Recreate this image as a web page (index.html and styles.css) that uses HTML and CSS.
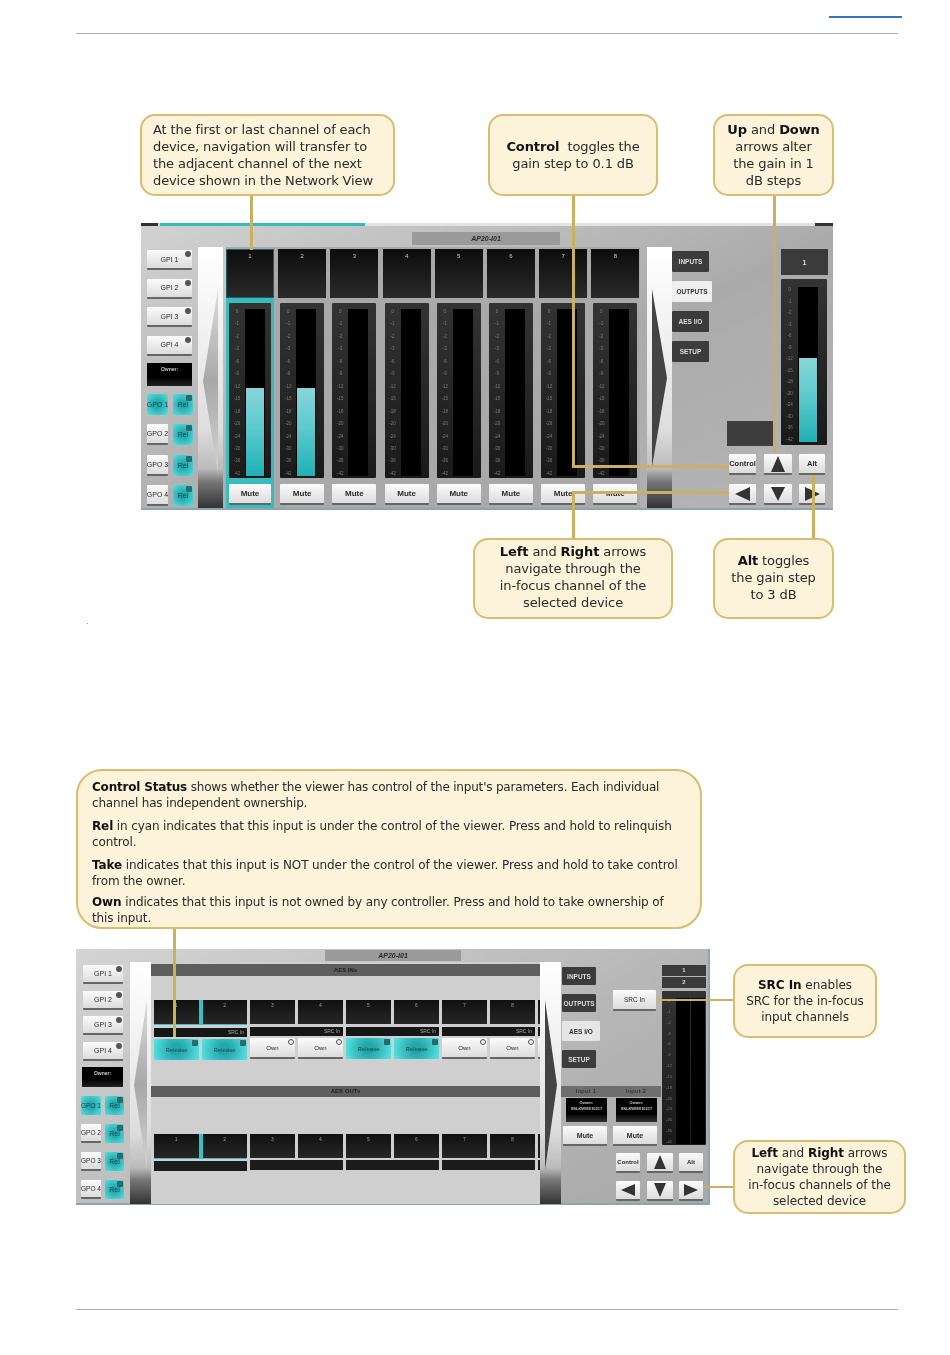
FILE: index.html
```html
<!DOCTYPE html>
<html lang="en">
<head>
<meta charset="utf-8">
<title>AP20-I01 control panel</title>
<link rel="stylesheet" href="styles.css">
</head>
<body>
<div class="page">
  <header class="page-head"><a class="head-link" href="#"></a><div class="rule"></div></header>

  <section class="figure fig-a">
    <div class="panel panel-a">
      <div class="topbar"><i class="tb-dark"></i><i class="tb-cyan"></i><i class="tb-light"></i><i class="tb-dark2"></i></div>
      <div class="title title-a">AP20-I01</div>
      <div class="body-a">
        <div class="gp-col gp-a">
          <div class="btn gpi">GPI 1<i class="dot"></i></div>
          <div class="btn gpi">GPI 2<i class="dot"></i></div>
          <div class="btn gpi">GPI 3<i class="dot"></i></div>
          <div class="btn gpi">GPI 4<i class="dot"></i></div>
          <div class="owner">Owner:</div>
          <div class="gpo-row"><div class="cy gpo">GPO 1</div><div class="cy rel">Rel<i class="dot"></i></div></div>
          <div class="gpo-row"><div class="btn gpo">GPO 2</div><div class="cy rel">Rel<i class="dot"></i></div></div>
          <div class="gpo-row"><div class="btn gpo">GPO 3</div><div class="cy rel">Rel<i class="dot"></i></div></div>
          <div class="gpo-row"><div class="btn gpo">GPO 4</div><div class="cy rel">Rel<i class="dot"></i></div></div>
        </div>
        <div class="nav nav-a"><svg class="nav-arrow" width="25" height="184" viewBox="0 0 25 184"><defs><linearGradient id="fadeA" x1="0" y1="0" x2="0" y2="1"><stop offset="0" stop-color="#dcdcdc"/><stop offset=".5" stop-color="#a8a8a8"/><stop offset="1" stop-color="#d4d4d4"/></linearGradient></defs><polygon points="5,92 20,0 20,184" fill="url(#fadeA)"/></svg></div>
        <div class="channels">
          <div class="channel sel"><div class="ch-top">1</div><div class="ch-meter"><div class="scale"><b>0</b><b>-1</b><b>-2</b><b>-3</b><b>-6</b><b>-9</b><b>-12</b><b>-15</b><b>-18</b><b>-20</b><b>-24</b><b>-30</b><b>-36</b><b>-42</b></div><div class="well"><div class="fill"></div></div></div><div class="btn mute">Mute</div></div>
          <div class="channel"><div class="ch-top">2</div><div class="ch-meter"><div class="scale"><b>0</b><b>-1</b><b>-2</b><b>-3</b><b>-6</b><b>-9</b><b>-12</b><b>-15</b><b>-18</b><b>-20</b><b>-24</b><b>-30</b><b>-36</b><b>-42</b></div><div class="well"><div class="fill"></div></div></div><div class="btn mute">Mute</div></div>
          <div class="channel"><div class="ch-top">3</div><div class="ch-meter"><div class="scale"><b>0</b><b>-1</b><b>-2</b><b>-3</b><b>-6</b><b>-9</b><b>-12</b><b>-15</b><b>-18</b><b>-20</b><b>-24</b><b>-30</b><b>-36</b><b>-42</b></div><div class="well"></div></div><div class="btn mute">Mute</div></div>
          <div class="channel"><div class="ch-top">4</div><div class="ch-meter"><div class="scale"><b>0</b><b>-1</b><b>-2</b><b>-3</b><b>-6</b><b>-9</b><b>-12</b><b>-15</b><b>-18</b><b>-20</b><b>-24</b><b>-30</b><b>-36</b><b>-42</b></div><div class="well"></div></div><div class="btn mute">Mute</div></div>
          <div class="channel"><div class="ch-top">5</div><div class="ch-meter"><div class="scale"><b>0</b><b>-1</b><b>-2</b><b>-3</b><b>-6</b><b>-9</b><b>-12</b><b>-15</b><b>-18</b><b>-20</b><b>-24</b><b>-30</b><b>-36</b><b>-42</b></div><div class="well"></div></div><div class="btn mute">Mute</div></div>
          <div class="channel"><div class="ch-top">6</div><div class="ch-meter"><div class="scale"><b>0</b><b>-1</b><b>-2</b><b>-3</b><b>-6</b><b>-9</b><b>-12</b><b>-15</b><b>-18</b><b>-20</b><b>-24</b><b>-30</b><b>-36</b><b>-42</b></div><div class="well"></div></div><div class="btn mute">Mute</div></div>
          <div class="channel"><div class="ch-top">7</div><div class="ch-meter"><div class="scale"><b>0</b><b>-1</b><b>-2</b><b>-3</b><b>-6</b><b>-9</b><b>-12</b><b>-15</b><b>-18</b><b>-20</b><b>-24</b><b>-30</b><b>-36</b><b>-42</b></div><div class="well"></div></div><div class="btn mute">Mute</div></div>
          <div class="channel"><div class="ch-top">8</div><div class="ch-meter"><div class="scale"><b>0</b><b>-1</b><b>-2</b><b>-3</b><b>-6</b><b>-9</b><b>-12</b><b>-15</b><b>-18</b><b>-20</b><b>-24</b><b>-30</b><b>-36</b><b>-42</b></div><div class="well"></div></div><div class="btn mute">Mute</div></div>
        </div>
        <div class="nav nav-a nav-a-right"><svg class="nav-arrow" width="25" height="178" viewBox="0 0 25 178"><polygon points="20,89 5,0 5,178" fill="#444"/></svg></div>
        <div class="side-a">
          <div class="side-a-top">
            <div class="tabs tabs-a">
              <div class="tab">INPUTS</div>
              <div class="tab on">OUTPUTS</div>
              <div class="tab">AES I/O</div>
              <div class="tab">SETUP</div>
            </div>
            <div class="blank-col"><div class="blank-box"></div></div>
            <div class="master">
              <div class="num-box">1</div>
              <div class="ch-meter master-meter"><div class="scale"><b>0</b><b>-1</b><b>-2</b><b>-3</b><b>-6</b><b>-9</b><b>-12</b><b>-15</b><b>-18</b><b>-20</b><b>-24</b><b>-30</b><b>-36</b><b>-42</b></div><div class="well"><div class="fill"></div></div></div>
            </div>
          </div>
          <div class="pad pad-a">
            <div class="btn pad-btn">Control</div>
            <div class="btn pad-btn"><svg width="18" height="18" viewBox="0 0 18 18"><polygon points="9,1 16,17 2,17" fill="#333"/></svg></div>
            <div class="btn pad-btn">Alt</div>
            <div class="btn pad-btn"><svg width="18" height="16" viewBox="0 0 18 16"><polygon points="1,8 16,1 16,15" fill="#333"/></svg></div>
            <div class="btn pad-btn"><svg width="18" height="16" viewBox="0 0 18 16"><polygon points="9,15 2,1 16,1" fill="#333"/></svg></div>
            <div class="btn pad-btn"><svg width="18" height="16" viewBox="0 0 18 16"><polygon points="17,8 2,1 2,15" fill="#333"/></svg></div>
          </div>
        </div>
      </div>
    </div>

    <i class="wire a-w1"></i><i class="wire a-w2"></i><i class="wire a-w3"></i><i class="wire a-w4"></i><i class="wire a-w5"></i><i class="wire a-w6"></i><i class="wire a-w7"></i>

    <div class="callout a-c1">At the first or last channel of each<br>device, navigation will transfer to<br>the adjacent channel of the next<br>device shown in the Network View</div>
    <div class="callout center a-c2"><strong>Control</strong>&nbsp; toggles the<br>gain step to 0.1 dB</div>
    <div class="callout center a-c3"><strong>Up</strong> and <strong>Down</strong><br>arrows alter<br>the gain in 1<br>dB steps</div>
    <div class="callout center a-c4"><strong>Left</strong> and <strong>Right</strong> arrows<br>navigate through the<br>in-focus channel of the<br>selected device</div>
    <div class="callout center a-c5"><strong>Alt</strong> toggles<br>the gain step<br>to 3 dB</div>
    <i class="speck"></i>
  </section>

  <section class="figure fig-b">
    <div class="panel panel-b">
      <div class="title title-b">AP20-I01</div>
      <div class="body-b">
        <div class="gp-col gp-b">
          <div class="btn gpi">GPI 1<i class="dot"></i></div>
          <div class="btn gpi">GPI 2<i class="dot"></i></div>
          <div class="btn gpi">GPI 3<i class="dot"></i></div>
          <div class="btn gpi">GPI 4<i class="dot"></i></div>
          <div class="owner">Owner:</div>
          <div class="gpo-row"><div class="cy gpo">GPO 1</div><div class="cy rel">Rel<i class="dot"></i></div></div>
          <div class="gpo-row"><div class="btn gpo">GPO 2</div><div class="cy rel">Rel<i class="dot"></i></div></div>
          <div class="gpo-row"><div class="btn gpo">GPO 3</div><div class="cy rel">Rel<i class="dot"></i></div></div>
          <div class="gpo-row"><div class="btn gpo">GPO 4</div><div class="cy rel">Rel<i class="dot"></i></div></div>
        </div>
        <div class="nav nav-b"><svg class="nav-arrow" width="21" height="170" viewBox="0 0 21 170"><defs><linearGradient id="fadeB" x1="0" y1="0" x2="0" y2="1"><stop offset="0" stop-color="#dcdcdc"/><stop offset=".5" stop-color="#a8a8a8"/><stop offset="1" stop-color="#d4d4d4"/></linearGradient></defs><polygon points="4,85 17,0 17,170" fill="url(#fadeB)"/></svg></div>
        <div class="aes">
          <div class="aes-head">AES INs</div>
          <div class="aes-row row-in">
            <div class="group"><div class="pair sel"><div class="box">1</div><div class="box">2</div></div><div class="strip">SRC In</div><div class="pair-btns"><div class="cy rel-wide">Release<i class="dot"></i></div><div class="cy rel-wide">Release<i class="dot"></i></div></div></div>
            <div class="group"><div class="pair"><div class="box">3</div><div class="box">4</div></div><div class="strip">SRC In</div><div class="pair-btns"><div class="btn own">Own<i class="dot ring"></i></div><div class="btn own">Own<i class="dot ring"></i></div></div></div>
            <div class="group"><div class="pair"><div class="box">5</div><div class="box">6</div></div><div class="strip">SRC In</div><div class="pair-btns"><div class="cy rel-wide">Release<i class="dot"></i></div><div class="cy rel-wide">Release<i class="dot"></i></div></div></div>
            <div class="group"><div class="pair"><div class="box">7</div><div class="box">8</div></div><div class="strip">SRC In</div><div class="pair-btns"><div class="btn own">Own<i class="dot ring"></i></div><div class="btn own">Own<i class="dot ring"></i></div></div></div>
            <div class="group"><div class="pair"><div class="box"></div><div class="box"></div></div><div class="strip"></div><div class="pair-btns"><div class="btn own"></div><div class="btn own"></div></div></div>
          </div>
          <div class="aes-head head-out">AES OUTs</div>
          <div class="aes-row row-out">
            <div class="group"><div class="pair sel"><div class="box">1</div><div class="box">2</div></div><div class="strip"></div></div>
            <div class="group"><div class="pair"><div class="box">3</div><div class="box">4</div></div><div class="strip"></div></div>
            <div class="group"><div class="pair"><div class="box">5</div><div class="box">6</div></div><div class="strip"></div></div>
            <div class="group"><div class="pair"><div class="box">7</div><div class="box">8</div></div><div class="strip"></div></div>
            <div class="group"><div class="pair"><div class="box"></div><div class="box"></div></div><div class="strip"></div></div>
          </div>
        </div>
        <div class="nav nav-b nav-b-right"><svg class="nav-arrow" width="21" height="170" viewBox="0 0 21 170"><polygon points="17,85 5,0 5,170" fill="#444"/></svg></div>
        <div class="side-b">
          <div class="side-b-top">
            <div class="inputs">
              <div class="inputs-top">
                <div class="tabs tabs-b">
                  <div class="tab">INPUTS</div>
                  <div class="tab">OUTPUTS</div>
                  <div class="tab on">AES I/O</div>
                  <div class="tab">SETUP</div>
                </div>
                <div class="btn src">SRC In</div>
              </div>
              <div class="input-head"><span>Input 1</span><span>Input 2</span></div>
              <div class="input-cols">
                <div class="input-col"><div class="own-box">Owner:<br>SSLKWMX10217</div><div class="btn mute">Mute</div></div>
                <div class="input-col"><div class="own-box">Owner:<br>SSLKWMX10217</div><div class="btn mute">Mute</div></div>
              </div>
            </div>
            <div class="master-b">
              <div class="num-b">1</div>
              <div class="num-b">2</div>
              <div class="ch-meter meter-b"><div class="scale"><b>0</b><b>-1</b><b>-2</b><b>-3</b><b>-6</b><b>-9</b><b>-12</b><b>-15</b><b>-18</b><b>-20</b><b>-24</b><b>-30</b><b>-36</b><b>-42</b></div><div class="well"></div><div class="well"></div></div>
            </div>
          </div>
          <div class="pad pad-b">
            <div class="btn pad-btn">Control</div>
            <div class="btn pad-btn"><svg width="16" height="16" viewBox="0 0 16 16"><polygon points="8,1 14,15 2,15" fill="#333"/></svg></div>
            <div class="btn pad-btn">Alt</div>
            <div class="btn pad-btn"><svg width="16" height="14" viewBox="0 0 16 14"><polygon points="1,7 15,1 15,13" fill="#333"/></svg></div>
            <div class="btn pad-btn"><svg width="16" height="16" viewBox="0 0 16 16"><polygon points="8,15 2,1 14,1" fill="#333"/></svg></div>
            <div class="btn pad-btn"><svg width="16" height="14" viewBox="0 0 16 14"><polygon points="15,7 1,1 1,13" fill="#333"/></svg></div>
          </div>
        </div>
      </div>
    </div>

    <i class="wire b-w1"></i><i class="wire b-w2"></i><i class="wire b-w3"></i>

    <div class="callout b-c1">
      <p class="tight"><strong>Control Status</strong> shows whether the viewer has control of the input's parameters. Each individual<br>channel has independent ownership.</p>
      <p><strong>Rel</strong> in cyan indicates that this input is under the control of the viewer. Press and hold to relinquish<br>control.</p>
      <p class="loose"><strong>Take</strong> indicates that this input is NOT under the control of the viewer. Press and hold to take control<br>from the owner.</p>
      <p class="last"><strong>Own</strong> indicates that this input is not owned by any controller. Press and hold to take ownership of<br>this input.</p>
    </div>
    <div class="callout center small b-c2"><strong>SRC In</strong> enables<br>SRC for the in-focus<br>input channels</div>
    <div class="callout center small b-c3"><strong>Left</strong> and <strong>Right</strong> arrows<br>navigate through the<br>in-focus channels of the<br>selected device</div>
  </section>

  <footer class="page-foot"><div class="rule"></div></footer>
</div>
</body>
</html>
```
FILE: styles.css
```css
* { box-sizing: border-box; }
html, body { margin: 0; padding: 0; background: #fff; }
body { font-family: "DejaVu Sans", Verdana, sans-serif; color: #222; }
.page { width: 950px; height: 1355px; overflow: hidden; display: flex; flex-direction: column; }

/* page furniture */
.page-head { height: 34px; padding: 16px 0 0 76px; display: flex; flex-direction: column; flex: none; }
.head-link { display: block; width: 73px; height: 2px; margin-left: 753px; background: #3a6fc4; }
.rule { width: 822px; height: 1px; background: #b0b0b0; }
.page-head .rule { margin-top: 15px; }
.page-foot { margin-top: 89px; padding-left: 76px; flex: none; }

/* figures: callouts and wires are annotations on a free canvas */
.figure { position: relative; flex: none; }
.fig-a { height: 596px; margin-top: 66px; padding: 123px 0 0 141px; }
.fig-b { height: 460px; margin-top: 64px; padding: 189px 0 0 76px; }
.wire { position: absolute; background: #cbb061; display: block; filter: blur(.25px); }
.callout { position: absolute; background: #fdf3da; border: 2px solid #d8bd70; border-radius: 15px; font-size: 13px; line-height: 17px; white-space: nowrap; color: #2a2a2a; padding: 5px 11px; filter: blur(.3px); letter-spacing: -.11px; }
.callout strong { color: #111; }
.center { text-align: center; }
.small { font-size: 12px; line-height: 16px; padding: 3px 6px; letter-spacing: -.05px; }
.speck { position: absolute; left: 87px; top: 523px; width: 1px; height: 1px; background: #999; }

.a-c1 { left: 140px; top: 14px; width: 255px; height: 82px; }
.a-c2 { left: 488px; top: 14px; width: 170px; height: 82px; padding-top: 22px; }
.a-c3 { left: 713px; top: 14px; width: 121px; height: 82px; }
.a-c4 { left: 473px; top: 438px; width: 200px; height: 81px; padding-top: 3px; }
.a-c5 { left: 713px; top: 438px; width: 121px; height: 81px; padding-top: 12px; }
.a-w1 { left: 250px; top: 96px; width: 3px; height: 54px; }
.a-w2 { left: 572px; top: 96px; width: 3px; height: 271px; }
.a-w3 { left: 572px; top: 365px; width: 157px; height: 3px; }
.a-w4 { left: 773px; top: 96px; width: 3px; height: 256px; }
.a-w5 { left: 572px; top: 391px; width: 3px; height: 48px; }
.a-w6 { left: 572px; top: 391px; width: 157px; height: 3px; }
.a-w7 { left: 812px; top: 375px; width: 3px; height: 64px; }

.b-c1 { left: 76px; top: 9px; width: 626px; height: 160px; border-radius: 26px; font-size: 12px; line-height: 16px; padding: 8px 14px; letter-spacing: -.12px; }
.b-c1 p { margin: 0 0 7px; }
.b-c1 .tight { letter-spacing: -.19px; }
.b-c1 .loose { letter-spacing: -.1px; }
.b-c1 .last { margin-top: -2px; }
.b-c2 { left: 733px; top: 204px; width: 144px; height: 74px; padding-top: 11px; }
.b-c3 { left: 733px; top: 380px; width: 173px; height: 74px; }
.b-w1 { left: 173px; top: 169px; width: 3px; height: 108px; }
.b-w2 { left: 656px; top: 239px; width: 77px; height: 2px; }
.b-w3 { left: 704px; top: 426px; width: 29px; height: 2px; }

/* panels */
.panel { filter: blur(.55px); font-family: "Liberation Sans", Arial, sans-serif; position: relative; display: flex; flex-direction: column; }
.panel-a { width: 692px; height: 287px; background: linear-gradient(155deg, #d2d2d2, #ababab 55%, #b4b4b4); border-bottom: 2px solid #8ea4b0; }
.panel-b { width: 634px; height: 256px; background: linear-gradient(150deg, #d4d4d4, #b6b6b6 60%, #a8a8a8); border-bottom: 2px solid #8ea4b0; border-right: 2px solid #8ea4b0; }
.topbar { display: flex; height: 3px; flex: none; }
.topbar i { display: block; height: 3px; }
.tb-dark { width: 17px; background: #333; }
.tb-cyan { width: 205px; margin-left: 2px; background: #34bcbc; }
.tb-light { flex: 1; background: #e2e2e2; }
.tb-dark2 { width: 18px; background: #333; }
.title { flex: none; background: #9a9a9a; color: #2b2b2b; font-size: 7px; font-weight: bold; font-style: italic; text-align: center; }
.title-a { width: 148px; height: 13px; line-height: 13px; margin: 6px 0 2px 271px; }
.title-b { width: 136px; height: 11px; line-height: 11px; margin: 1px 0 1px 249px; }
.body-a, .body-b { display: flex; flex: 1; min-height: 0; }

/* shared controls */
.btn { background: linear-gradient(#fbfbfb, #dcdcdc); border-bottom: 2px solid #666; border-radius: 1px; color: #2a2a2a; font-size: 7px; display: flex; align-items: center; justify-content: center; position: relative; white-space: nowrap; flex: none; }
.cy { background: radial-gradient(circle, #22a6aa 20%, #5ae4e4 100%); color: #1c4a4c; font-size: 7px; display: flex; align-items: center; justify-content: center; position: relative; border-radius: 1px; white-space: nowrap; flex: none; }
.dot { position: absolute; top: 1px; right: 1px; width: 6px; height: 6px; border-radius: 50%; background: #555; }
.cy .dot { border-radius: 1px; background: #2b6a6c; }
.dot.ring { background: #eee; border: 1px solid #555; }
.owner { background: linear-gradient(#000 60%, #222); color: #ccc; font-size: 5px; font-weight: bold; text-align: center; padding-top: 3px; flex: none; }
.gp-col { flex: none; display: flex; flex-direction: column; }
.gpo-row { display: flex; justify-content: space-between; flex: none; }
.nav { flex: none; display: flex; flex-direction: column; align-items: center; }
.nav-a { width: 25px; height: 261px; background: linear-gradient(#fff, #eee 40%, #ddd 70%, #bbb 85%, #777 90%, #333 100%); }
.nav-b { width: 21px; height: 242px; background: linear-gradient(#fff, #eee 40%, #ddd 70%, #bbb 85%, #777 90%, #333 100%); }
.nav-a .nav-arrow { margin-top: 42px; }
.nav-b .nav-arrow { margin-top: 38px; }
.tabs { display: flex; flex-direction: column; align-items: flex-start; flex: none; }
.tab { background: #3c3c3c; color: #ddd; font-size: 6.5px; font-weight: bold; display: flex; align-items: center; justify-content: center; border-radius: 1px; flex: none; }
.tab.on { background: #efefef; color: #333; }
.pad { display: grid; }
.pad-btn { min-width: 0; font-size: 7.5px; font-weight: bold; }
.mute { font-weight: bold; font-size: 8px; }

/* figure A */
.gp-a { width: 46px; margin: 3px 0 0 6px; }
.gp-a .gpi { width: 45px; height: 20px; margin: 0 0 8.5px 0; }
.gp-a .gpi:nth-child(4) { margin-bottom: 7px; }
.gp-a .owner { width: 45px; height: 23px; margin-bottom: 8px; }
.gp-a .gpo-row { height: 21px; margin-bottom: 9.5px; }
.gp-a .gpo { width: 21px; font-size: 7px; }
.gp-a .rel { width: 20px; }
.nav-a { margin-left: 5px; }
.channels { flex: none; width: 414px; margin-left: 3px; display: flex; gap: 4.2px; background: #a9a9a9; }
.nav-a-right { margin-left: 7px; width: 25px; }
.channel { width: 48px; height: 259px; margin-top: 2px; display: flex; flex-direction: column; align-items: center; flex: none; }
.channel.sel { background: linear-gradient(transparent 49px, #37bdbd 49px); }
.ch-top { width: 48px; height: 49px; flex: none; background: linear-gradient(#0c0c0c, #2a2a2a); color: #ccc; font-size: 6px; text-align: center; padding-top: 4px; }
.sel .ch-top { box-shadow: inset 0 0 0 1px #1b5f60; }
.ch-meter { width: 44px; height: 175px; margin-top: 5px; flex: none; background: linear-gradient(#333, #1a1a1a); display: flex; padding: 6px 2px 2px 3px; gap: 3px; border-radius: 1px; position: relative; }
.sel .ch-meter { width: 42px; }
.scale { width: 10px; flex: none; display: flex; flex-direction: column; justify-content: space-between; align-items: center; color: #7c7c7c; font-size: 4.5px; line-height: 5px; }
.scale b { font-weight: normal; }
.well { width: 20px; background: #000; display: flex; flex-direction: column; justify-content: flex-end; padding: 0 1px; }
.fill { height: 88px; background: linear-gradient(#86d6d8, #5dcace 45%, #1fb0b4); }
.channel .mute { width: 44px; height: 21px; margin-top: 6px; flex: none; }
.sel .mute { width: 42px; }
.side-a { flex: none; width: 161px; display: flex; flex-direction: column; }
.side-a-top { display: flex; height: 199px; flex: none; }
.tabs-a { width: 40px; padding-top: 4px; gap: 9px; }
.tabs-a .tab { width: 37px; height: 21px; }
.tabs-a .tab.on { width: 40px; }
.blank-col { width: 47px; margin-left: 15px; display: flex; flex-direction: column; justify-content: flex-end; flex: none; }
.blank-box { height: 25px; background: #3e3e3e; }
.master { width: 47px; margin-left: 7px; padding-top: 2px; flex: none; }
.num-box { height: 26px; background: #3b3b3b; color: #ddd; font-size: 7px; font-weight: bold; display: flex; align-items: center; justify-content: center; }
.master-meter { width: 46px; height: 166px; margin-top: 4px; padding: 8px 2px 3px 3px; }
.master-meter .scale { width: 11px; }
.master-meter .well { width: 20px; }
.master-meter .fill { height: 84px; }
.pad-a { grid-template-columns: 27px 28px 26px; grid-auto-rows: 21px; column-gap: 7.5px; row-gap: 9px; margin: 8px 0 0 57px; width: 90px; }

/* figure B */
.gp-b { width: 47px; margin: 3px 0 0 5px; }
.gp-b .gpi { width: 40px; height: 19px; margin: 0 0 6.5px 2px; }
.gp-b .owner { width: 41px; height: 20px; margin: 0 0 9px 1px; }
.gp-b .gpo-row { height: 19px; margin-bottom: 9px; width: 43px; }
.gp-b .gpo { width: 20px; font-size: 6.5px; }
.gp-b .rel { width: 19px; }
.nav-b { margin-left: 2px; }
.nav-b-right { margin-left: 0; }
.aes { width: 389px; height: 242px; flex: none; background: #cfcfcf; overflow: hidden; }
.aes-head { height: 12px; margin-top: 2px; background: #5e5e5e; color: #222; font-size: 6px; font-weight: bold; line-height: 12px; text-align: center; }
.head-out { margin-top: 0; height: 11px; line-height: 11px; }
.aes-row { display: flex; gap: 3px; padding-left: 3px; }
.row-in { margin-top: 24px; height: 86px; }
.row-out { margin-top: 37px; }
.group { width: 93px; flex: none; display: flex; flex-direction: column; }
.pair { display: flex; justify-content: space-between; }
.box { width: 45px; height: 24px; background: linear-gradient(#111, #262626); color: #999; font-size: 5px; text-align: center; padding-top: 2px; }
.pair.sel { background: #36c0c0; padding-bottom: 1px; }
.pair.sel .box { width: 44.5px; }
.strip { height: 9px; margin-top: 3px; background: #161616; color: #aaa; font-size: 5px; line-height: 9px; text-align: right; padding-right: 3px; }
.row-out .strip { height: 10px; margin-top: 2px; background: #1c1c1c; }
.pair-btns { display: flex; justify-content: space-between; margin-top: 2px; }
.rel-wide, .own { width: 45px; height: 21px; font-size: 6px; }
.side-b { flex: none; width: 149px; display: flex; flex-direction: column; }
.side-b-top { display: flex; height: 184px; flex: none; }
.inputs { width: 100px; flex: none; }
.inputs-top { display: flex; height: 124px; padding-left: 1px; }
.tabs-b { width: 51px; padding-top: 5px; gap: 9px; }
.tabs-b .tab { width: 34px; height: 18px; }
.tabs-b .tab.on { width: 38px; height: 20px; background: #e6e6e6; }
.src { width: 43px; height: 21px; margin-top: 28px; font-size: 6.5px; }
.input-head { height: 11px; background: #6e6e6e; color: #222; font-size: 6px; display: flex; justify-content: space-around; line-height: 11px; letter-spacing: .3px; }
.input-cols { display: flex; gap: 6px; padding-left: 2px; }
.input-col { width: 44px; display: flex; flex-direction: column; }
.own-box { width: 41px; height: 24px; margin-top: 1px; align-self: flex-end; background: linear-gradient(#000 65%, #333); color: #ccc; font-size: 4px; line-height: 6px; font-weight: bold; text-align: center; padding-top: 2px; white-space: nowrap; }
.input-col .mute { width: 44px; height: 20px; margin-top: 4px; font-size: 7px; }
.master-b { width: 44px; margin-left: 1px; padding-top: 3px; flex: none; }
.num-b { height: 11px; margin-bottom: 1px; background: #3b3b3b; color: #ddd; font-size: 6px; font-weight: bold; text-align: center; line-height: 11px; }
.meter-b { width: 44px; height: 154px; margin-top: 3px; padding: 7px 1px 1px 1px; gap: 1px; }
.meter-b .scale { width: 12px; font-size: 4px; }
.meter-b .well { width: 14px; }
.pad-b { grid-template-columns: 24px 26px 24px; grid-auto-rows: 20px; column-gap: 6.5px; row-gap: 8px; margin: 7px 0 0 55px; width: 88px; }
.pad-b .pad-btn { font-size: 6px; }
```
